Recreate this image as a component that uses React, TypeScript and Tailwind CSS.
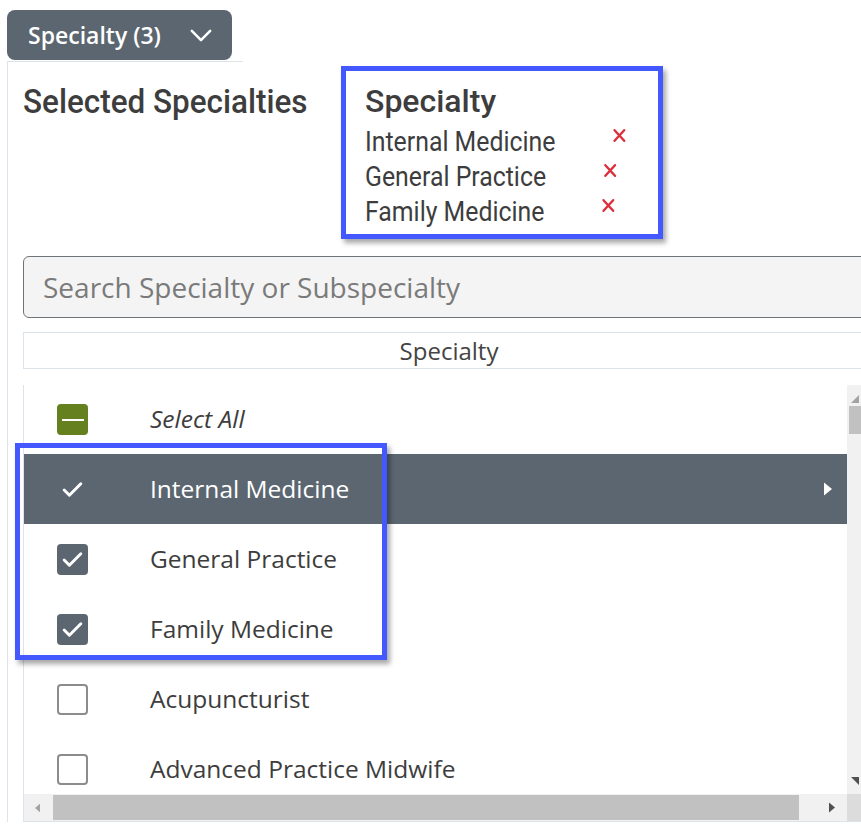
import React from "react";

const selected = ["Internal Medicine", "General Practice", "Family Medicine"];

const rows = [
  { label: "Internal Medicine", state: "active" },
  { label: "General Practice", state: "checked" },
  { label: "Family Medicine", state: "checked" },
  { label: "Acupuncturist", state: "empty" },
  { label: "Advanced Practice Midwife", state: "empty" },
];

const Check = ({ className }: { className?: string }) => (
  <svg viewBox="0 0 24 24" fill="none" stroke="currentColor" strokeWidth="2.8" strokeLinecap="round" strokeLinejoin="round" className={className}>
    <path d="M4 12.5l5 5L20 6.5" />
  </svg>
);

const Chevron = () => (
  <svg viewBox="0 0 24 14" fill="none" stroke="currentColor" strokeWidth="2.8" strokeLinecap="round" strokeLinejoin="round" className="w-[22px] h-[13px]">
    <path d="M2 2l10 10 10-10" />
  </svg>
);

const Cross = () => (
  <svg viewBox="0 0 14 14" stroke="currentColor" strokeWidth="2.2" strokeLinecap="round" className="w-[15px] h-[15px] text-[#dc2f3c]">
    <path d="M2 2l10 10M12 2L2 12" />
  </svg>
);

export default function App() {
  return (
    <div className="w-[861px] h-[831px] overflow-hidden bg-white pl-[7px] pt-[10px] relative font-['Open_Sans',sans-serif] text-[#444]">
      {/* Toggle button */}
      <button className="w-[225px] h-[50px] rounded-lg bg-[#5b6670] text-white flex items-center pl-[21px] gap-[29px] text-[23px] font-semibold">
        <span>Specialty (3)</span>
        <Chevron />
      </button>

      {/* Panel */}
      <div className="mt-px w-[880px] border-l border-[#dde3ea] pl-[15px] relative">
        <div className="absolute left-0 top-0 w-[235px] border-t border-[#dde3ea]" />

        {/* Header */}
        <div className="flex items-start pt-[5px]">
          <h2 className="font-['Roboto',sans-serif] font-medium text-[34px] leading-[40px] text-[#3d3d3d] mt-[15px] w-[318px] whitespace-nowrap scale-x-[0.925] origin-left">
            Selected Specialties
          </h2>
          <div className="w-[322px] h-[173px] border-[5px] border-[#4458ff] shadow-[3px_4px_5px_rgba(0,0,0,0.35)] pl-[19px] pt-[9px] font-['Roboto',sans-serif]">
            <div className="font-medium text-[32px] leading-[42px] text-[#3d3d3d] mb-[3px]">Specialty</div>
            {selected.map((s) => (
              <div key={s} className="flex items-center h-[35px] text-[27px] text-[#3d3d3d] whitespace-nowrap scale-x-[0.92] origin-left">
                <span>{s}</span>
                <span className="ml-[62px] -mt-[14px]"><Cross /></span>
              </div>
            ))}
          </div>
        </div>

        {/* Search */}
        <div className="mt-[17px] h-[62px] rounded-md border border-[#6f7478] bg-[#f4f4f4] flex items-center pl-[19px] text-[28px] text-[#7a7a7a]">
          Search Specialty or Subspecialty
        </div>

        {/* Column header */}
        <div className="mt-[14px] h-[37px] w-[852px] border border-[#dde3ea] flex items-center justify-center text-[24px] text-[#444]">
          Specialty
        </div>

        {/* List */}
        <div className="mt-[16px] w-[839px] border-l border-[#dde3ea] flex flex-col">
          <div className="flex h-[409px] overflow-hidden">
            <div className="w-[823px] flex flex-col shrink-0">
              <div className="h-[69px] shrink-0 flex items-center">
                <div className="ml-[33px] w-[31px] h-[31px] rounded-[4px] bg-[#65801f] flex items-center justify-center">
                  <div className="w-[22px] h-[2px] bg-white" />
                </div>
                <span className="ml-[62px] italic text-[24.5px] text-[#3d3d3d]">Select All</span>
              </div>
              {rows.map((r) => (
                <div
                  key={r.label}
                  className={`h-[70px] shrink-0 flex items-center ${r.state === "active" ? "bg-[#5b6670] text-white" : "text-[#3d3d3d]"}`}
                >
                  <div
                    className={`ml-[33px] w-[31px] h-[31px] rounded-[4px] flex items-center justify-center ${
                      r.state === "checked"
                        ? "bg-[#5b6670] text-white"
                        : r.state === "empty"
                        ? "border-2 border-[#8c8c8c]"
                        : "text-white"
                    }`}
                  >
                    {r.state !== "empty" && <Check className="w-[25px] h-[25px]" />}
                  </div>
                  <span className="ml-[62px] text-[24.5px] whitespace-nowrap">{r.label}</span>
                  {r.state === "active" && (
                    <svg viewBox="0 0 10 14" className="ml-auto mr-[14px] w-[10px] h-[14px] text-white" fill="currentColor">
                      <path d="M1 0.5 L9 7 L1 13.5 Z" />
                    </svg>
                  )}
                </div>
              ))}
            </div>
            {/* Vertical scrollbar */}
            <div className="w-[15px] shrink-0 bg-[#f1f1f1] flex flex-col items-center">
              <svg viewBox="0 0 8 8" className="mt-[10px] w-[8px] h-[8px] text-[#a3a3a3]" fill="currentColor">
                <path d="M8 0 V8 H0 Z" />
              </svg>
              <div className="mt-[3px] w-[13px] h-[28px] bg-[#c1c1c1] self-end" />
              <div className="flex-1" />
              <svg viewBox="0 0 8 8" className="mb-[9px] w-[8px] h-[8px] text-[#505050]" fill="currentColor">
                <path d="M0 0 H8 V8 Z" />
              </svg>
            </div>
          </div>
          {/* Horizontal scrollbar */}
          <div className="flex h-[28px] border-b border-[#dde3ea]">
            <div className="w-[823px] bg-[#f1f1f1] flex items-center">
              <svg viewBox="0 0 6 10" className="ml-[11px] w-[5px] h-[10px] text-[#a3a3a3]" fill="currentColor">
                <path d="M6 0 V10 L0 5 Z" />
              </svg>
              <div className="ml-[13px] w-[746px] h-[25px] bg-[#c1c1c1]" />
              <svg viewBox="0 0 6 10" className="ml-[30px] w-[6px] h-[11px] text-[#505050]" fill="currentColor">
                <path d="M0 0 V10 L6 5 Z" />
              </svg>
            </div>
            <div className="w-[15px] bg-[#dcdcdc]" />
          </div>
        </div>
      </div>

      {/* Annotation highlight over the checked rows */}
      <div className="absolute left-[15px] top-[443px] w-[372px] h-[217px] border-[5px] border-[#4458ff] shadow-[3px_4px_5px_rgba(0,0,0,0.35)] pointer-events-none" />
    </div>
  );
}
